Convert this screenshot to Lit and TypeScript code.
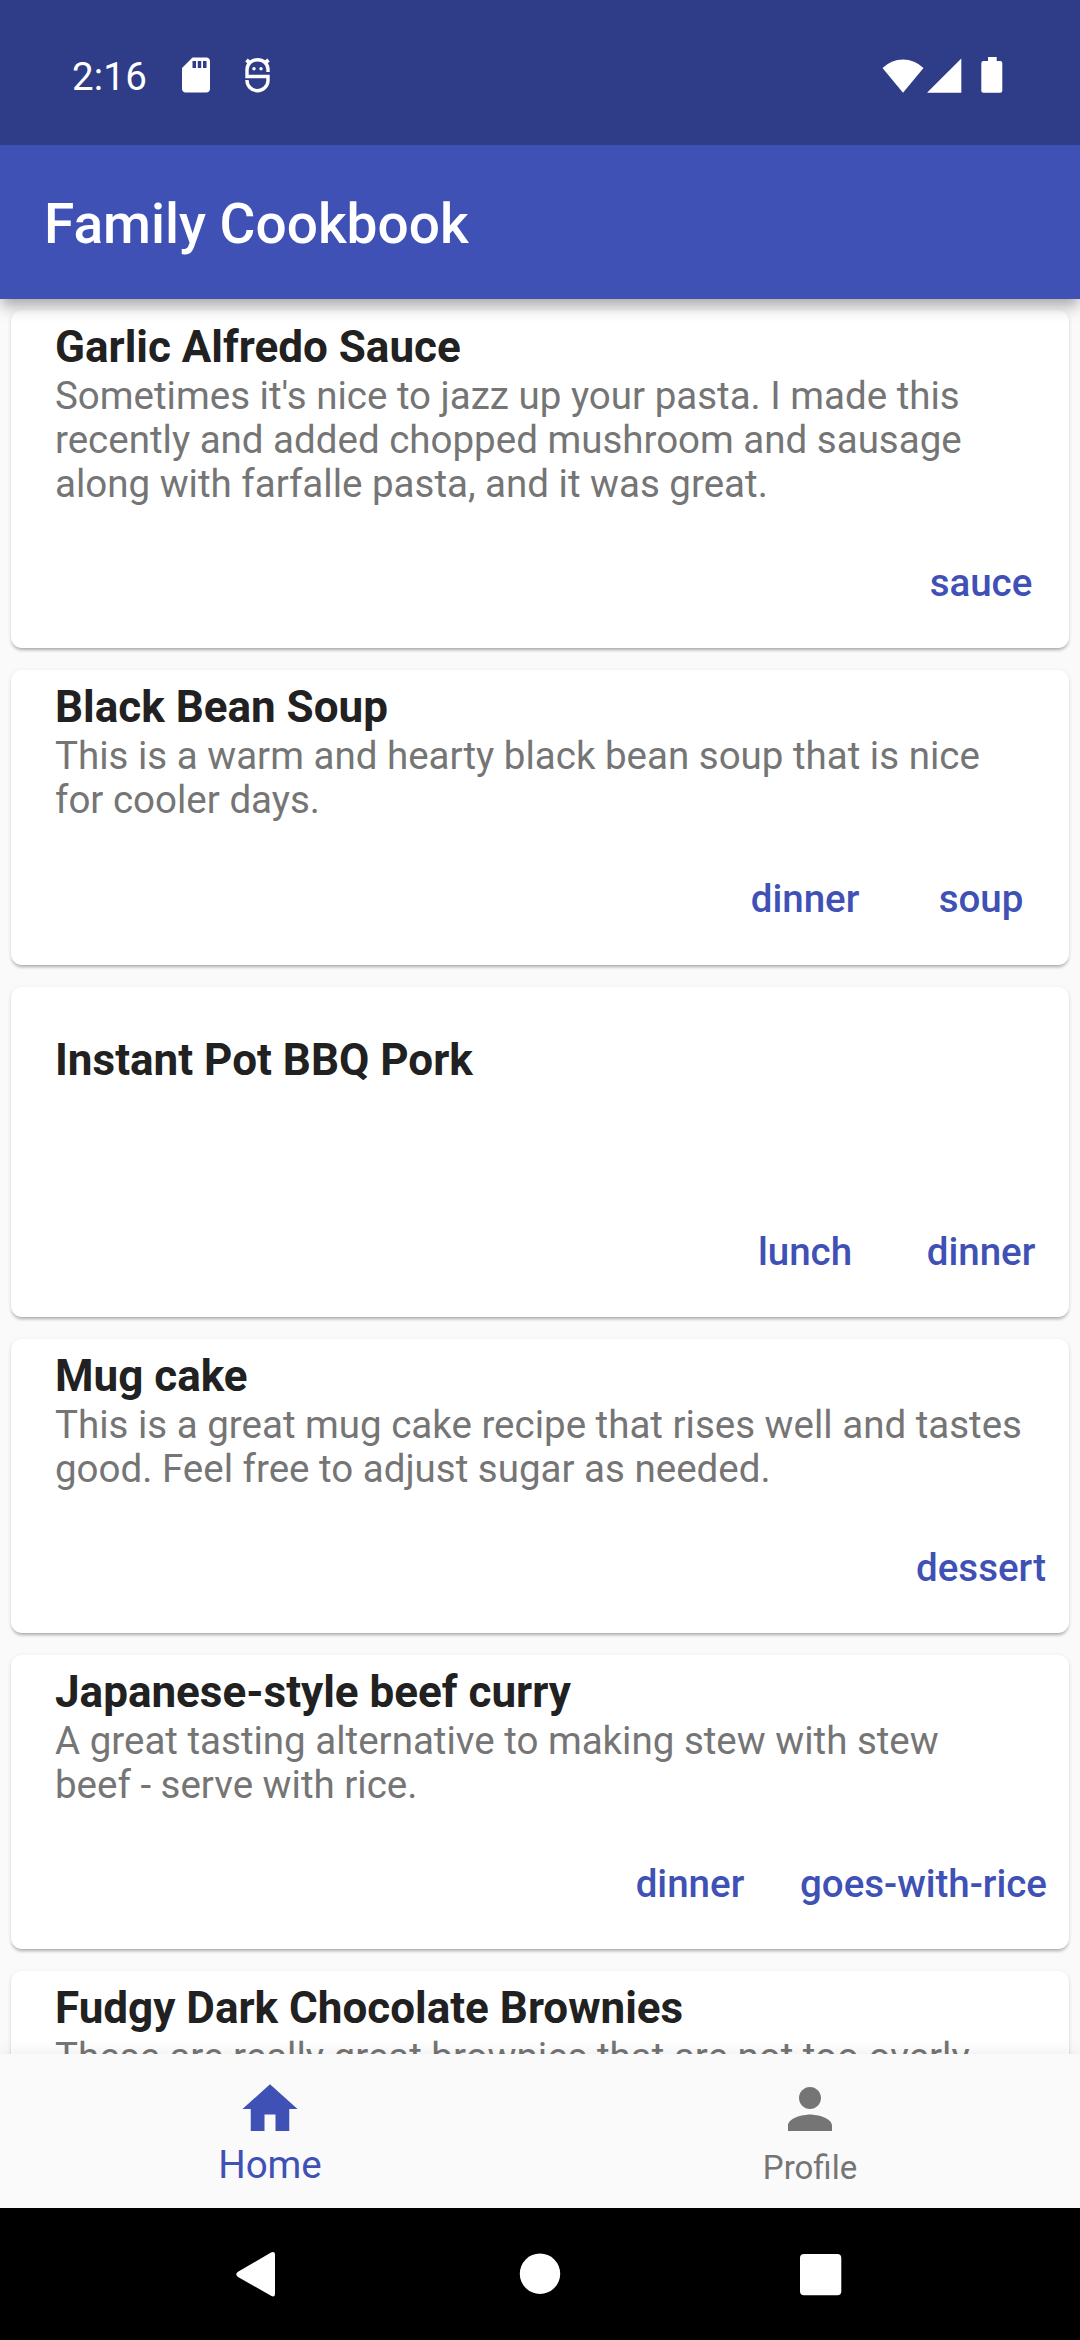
import { LitElement, html, css } from "lit";
import { customElement, property } from "lit/decorators.js";

interface Recipe {
  title: string;
  description?: string;
  tags: string[];
}

const recipes: Recipe[] = [
  {
    title: "Garlic Alfredo Sauce",
    description:
      "Sometimes it's nice to jazz up your pasta. I made this recently and added chopped mushroom and sausage along with farfalle pasta, and it was great.",
    tags: ["sauce"],
  },
  {
    title: "Black Bean Soup",
    description: "This is a warm and hearty black bean soup that is nice for cooler days.",
    tags: ["dinner", "soup"],
  },
  { title: "Instant Pot BBQ Pork", tags: ["lunch", "dinner"] },
  {
    title: "Mug cake",
    description:
      "This is a great mug cake recipe that rises well and tastes good. Feel free to adjust sugar as needed.",
    tags: ["dessert"],
  },
  {
    title: "Japanese-style beef curry",
    description: "A great tasting alternative to making stew with stew beef - serve with rice.",
    tags: ["dinner", "goes-with-rice"],
  },
  {
    title: "Fudgy Dark Chocolate Brownies",
    description: "These are really great brownies that are not too overly",
    tags: [],
  },
];

@customElement("status-bar")
class StatusBar extends LitElement {
  static styles = css`
    :host {
      position: relative;
      z-index: 2;
      display: flex;
      flex: none;
      justify-content: space-between;
      box-sizing: border-box;
      height: 145px;
      padding: 54px 77px 0 72px;
      background: #2f3c87;
      color: #fff;
    }
    .group { display: flex; height: 42px; align-items: center; }
    .time { font-size: 38.5px; line-height: 46px; width: 103px; letter-spacing: 0.2px; padding-top: 4px; }
    svg { display: block; fill: #fff; }
    .debug { margin-left: 20px; }
    .battery { margin-left: 19px; }
    .cell { margin-left: 3px; }
  `;
  render() {
    return html`
      <div class="group">
        <span class="time">2:16</span>
        <svg width="42" height="42" viewBox="0 0 24 24">
          <path d="M18 2h-8L4.02 8 4 20c0 1.1.9 2 2 2h12c1.1 0 2-.9 2-2V4c0-1.1-.9-2-2-2zm-6 6h-2V4h2v4zm3 0h-2V4h2v4zm3 0h-2V4h2v4z" />
        </svg>
        <svg class="debug" width="42" height="42" viewBox="0 0 42 42">
          <g fill="none" stroke="#fff" stroke-width="3.4">
            <path d="M31 18V15.500A10.400 9.700 0 0 0 10 15.500V22.500H31V26.500A10.500 10.500 0 0 1 10 26" />
            <path d="M9.500 6L13.500 9.500M31.500 6L27.500 9.500" stroke-width="3.8" />
          </g>
          <circle cx="17" cy="14.700" r="1.700" /><circle cx="24" cy="14.700" r="1.700" />
        </svg>
      </div>
      <div class="group">
        <svg width="42" height="42" viewBox="0 0 42 42">
          <path d="M.5 14A29 29 0 0 1 41.500 14L21 38.700Z" />
        </svg>
        <svg class="cell" width="35" height="42" viewBox="0 0 35 42"><path d="M0 38.700H34.300V4.500Z" /></svg>
        <svg class="battery" width="22" height="42" viewBox="0 0 22 42">
          <path d="M7 3h8.700v4h3.600q2 0 2 2v27.700q0 2-2 2H2.300q-2 0-2-2V9q0-2 2-2H7z" />
        </svg>
      </div>
    `;
  }
}

@customElement("recipe-card")
class RecipeCard extends LitElement {
  @property({ attribute: false }) recipe!: Recipe;
  static styles = css`
    :host {
      display: block;
      background: #fff;
      border-radius: 11px;
      box-shadow: 0 2.750px 2.750px -2px rgba(0, 0, 0, 0.2), 0 2.500px 2.750px rgba(0, 0, 0, 0.12),
        0 1px 5px rgba(0, 0, 0, 0.08);
    }
    .tile { box-sizing: border-box; padding: 11px 46px 10px 44px; }
    .single { height: 198px; padding-top: 47.7px; }
    .title { margin: 0; font-size: 44px; font-weight: 700; line-height: 52px; color: #212121; white-space: nowrap; }
    .text { margin: 0; padding-top: 1px; font-size: 38.5px; line-height: 44px; color: #757575; }
    .actions { display: flex; justify-content: flex-end; }
    .tag {
      box-sizing: border-box;
      min-width: 176px;
      height: 132px;
      padding: 1px 22px 0;
      border: 0;
      background: none;
      font: 500 38.5px/45px Roboto, sans-serif;
      color: #3f51b5;
    }
  `;
  render() {
    const { title, description, tags } = this.recipe;
    return html`
      <div class="tile ${description ? "" : "single"}">
        <h2 class="title">${title}</h2>
        ${description ? html`<p class="text">${description}</p>` : null}
      </div>
      <div class="actions">${tags.map((t) => html`<button class="tag">${t}</button>`)}</div>
    `;
  }
}

@customElement("app-root")
class AppRoot extends LitElement {
  static styles = css`
    :host {
      display: flex;
      flex-direction: column;
      width: 1080px;
      height: 2340px;
      overflow: hidden;
      background: #fafafa;
      font-family: Roboto, sans-serif;
    }
    .app-bar {
      position: relative;
      z-index: 1;
      display: flex;
      align-items: center;
      flex: none;
      box-sizing: border-box;
      height: 154px;
      padding: 3px 44px 0;
      background: #3f51b5;
      color: #fff;
      box-shadow: 0 5.500px 11px -2.750px rgba(0, 0, 0, 0.2), 0 11px 13.750px rgba(0, 0, 0, 0.14),
        0 2.750px 20px rgba(0, 0, 0, 0.06);
    }
    .app-title { margin: 0; font-size: 55px; font-weight: 500; line-height: 64px; }
    .list {
      display: flex;
      flex-direction: column;
      gap: 22px;
      flex: 1;
      min-height: 0;
      padding: 11px 11px 0;
      overflow: hidden;
    }
    .list recipe-card { flex: none; }
    .list recipe-card:nth-child(-n + 2) { padding-bottom: 0.35px; }
    .tabs {
      position: relative;
      display: flex;
      flex: none;
      height: 154px;
      background: #fafafa;
      box-shadow: 0 0 16px rgba(0, 0, 0, 0.09);
    }
    .tab {
      display: flex;
      flex-direction: column;
      align-items: center;
      flex: 1;
      padding-top: 22px;
      font-size: 33px;
      color: #757575;
    }
    .tab svg { width: 66px; height: 66px; fill: currentColor; }
    .tab span { line-height: 44px; padding-top: 4px; }
    .tab.active { color: #3f51b5; font-size: 38.5px; }
    .tab.active span { padding-top: 1px; }
    .system {
      position: relative;
      display: flex;
      align-items: center;
      justify-content: center;
      gap: 214px;
      flex: none;
      height: 132px;
      background: #000;
    }
    .system svg { width: 66px; height: 66px; fill: #fff; }
  `;
  render() {
    return html`
      <status-bar></status-bar>
      <header class="app-bar"><h1 class="app-title">Family Cookbook</h1></header>
      <main class="list">${recipes.map((r) => html`<recipe-card .recipe=${r}></recipe-card>`)}</main>
      <nav class="tabs">
        <div class="tab active">
          <svg viewBox="0 0 24 24"><path d="M10 20v-6h4v6h5v-8h3L12 3 2 12h3v8z" /></svg>
          <span>Home</span>
        </div>
        <div class="tab">
          <svg viewBox="0 0 24 24">
            <path d="M12 12c2.210 0 4-1.790 4-4s-1.790-4-4-4-4 1.790-4 4 1.790 4 4 4zm0 2c-2.670 0-8 1.340-8 4v2h16v-2c0-2.660-5.330-4-8-4z" />
          </svg>
          <span>Profile</span>
        </div>
      </nav>
      <footer class="system">
        <svg viewBox="0 0 66 66">
          <path d="M48 14V52.500Q48 57 44 54.700L11 36Q7.500 33.300 11 30.700L44 11.500Q48 9.500 48 14Z" />
        </svg>
        <svg viewBox="0 0 66 66"><circle cx="33" cy="32.700" r="20.200" /></svg>
        <svg viewBox="0 0 66 66"><rect x="13" y="13" width="41.300" height="41.300" rx="4" /></svg>
      </footer>
    `;
  }
}
